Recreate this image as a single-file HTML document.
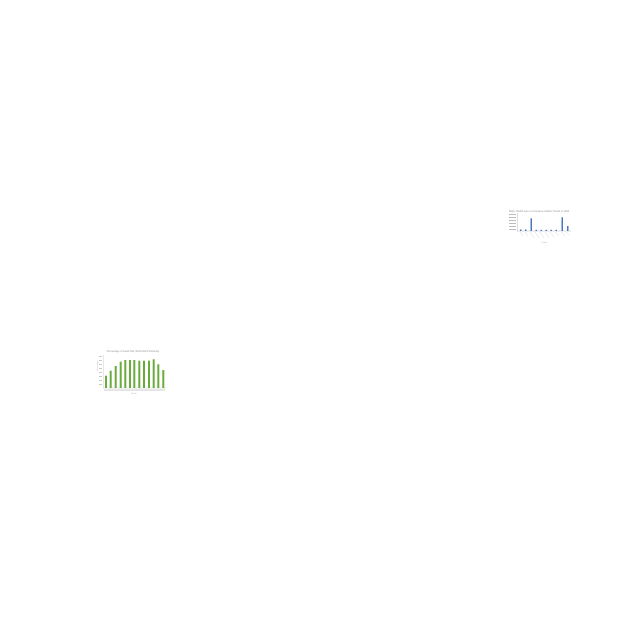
<!DOCTYPE html>
<html><head><style>html,body{margin:0;padding:0;background:#fff;width:640px;height:640px;overflow:hidden}</style></head>
<body>
<svg width="640" height="640" xmlns="http://www.w3.org/2000/svg" font-family="Liberation Sans, sans-serif">
<!-- blue chart -->
<text x="539" y="212" font-size="2.5" fill="#999" text-anchor="middle">Major Health-care or Insurance-related Trends in 2018</text>
<g fill="#bbb"><rect x="509" y="214" width="7" height="1"/><rect x="509" y="217" width="7" height="1"/><rect x="509" y="220" width="7" height="1"/><rect x="509" y="223" width="7" height="1"/><rect x="509" y="226" width="7" height="1"/><rect x="509" y="229" width="7" height="1"/></g>
<line x1="517.5" y1="213" x2="517.5" y2="231" stroke="#bbb" stroke-width="0.5"/>
<line x1="517" y1="231" x2="571" y2="231" stroke="#bbb" stroke-width="0.5"/>
<g fill="#4a78c0">
<rect x="520" y="229.5" width="1.5" height="1.5"/><rect x="525" y="229.5" width="1.5" height="1.5"/>
<rect x="530.5" y="218.3" width="1.5" height="12.7"/>
<rect x="535.5" y="229.8" width="1.5" height="1.2"/><rect x="540.5" y="229.8" width="1.5" height="1.2"/><rect x="545.5" y="229.8" width="1.5" height="1.2"/><rect x="550.5" y="229.8" width="1.5" height="1.2"/><rect x="555.5" y="229.8" width="1.5" height="1.2"/>
<rect x="561.5" y="217.3" width="1.5" height="13.7"/>
<rect x="567" y="226" width="1.5" height="5"/>
</g>
<g stroke="#ccc" stroke-width="0.4"><line x1="520" y1="232" x2="523" y2="236"/><line x1="525" y1="232" x2="528" y2="236"/><line x1="530" y1="232" x2="534" y2="238"/><line x1="535" y1="232" x2="539" y2="238"/><line x1="540" y1="232" x2="544" y2="238"/><line x1="545" y1="232" x2="549" y2="237"/><line x1="550" y1="232" x2="554" y2="237"/><line x1="555" y1="232" x2="559" y2="236"/><line x1="561" y1="232" x2="565" y2="236"/><line x1="566" y1="232" x2="569" y2="235"/></g>
<text x="544" y="243" font-size="2" fill="#bbb" text-anchor="middle">Trends</text>
<!-- green chart -->
<text x="133" y="352" font-size="2.5" fill="#999" text-anchor="middle">Percentage of Goals Met (2015-2016 Students)</text>
<text x="98" y="371" font-size="2" fill="#bbb" transform="rotate(-90 98 371)">Percentage</text>
<g fill="#bbb"><rect x="99" y="356" width="3" height="0.8"/><rect x="99" y="360" width="3" height="0.8"/><rect x="99" y="364" width="3" height="0.8"/><rect x="99" y="368" width="3" height="0.8"/><rect x="99" y="372" width="3" height="0.8"/><rect x="99" y="376" width="3" height="0.8"/><rect x="99" y="380" width="3" height="0.8"/><rect x="99" y="384" width="3" height="0.8"/></g>
<line x1="103.5" y1="355" x2="103.5" y2="388" stroke="#ccc" stroke-width="0.5"/>
<line x1="103" y1="388" x2="166" y2="388" stroke="#ccc" stroke-width="0.5"/>
<g fill="#6aab3e">
<rect x="105" y="375.7" width="2" height="12.3"/>
<rect x="109.7" y="370.7" width="2" height="17.3"/>
<rect x="114.7" y="366" width="2" height="22"/>
<rect x="119.7" y="361.7" width="2" height="26.3"/>
<rect x="124.3" y="360" width="2" height="28"/>
<rect x="129" y="360" width="2" height="28"/>
<rect x="133.3" y="360" width="2" height="28"/>
<rect x="138.3" y="360.7" width="2" height="27.3"/>
<rect x="143" y="360.7" width="2" height="27.3"/>
<rect x="148" y="360.7" width="2" height="27.3"/>
<rect x="152.7" y="359.3" width="2" height="28.7"/>
<rect x="157.3" y="364.3" width="2" height="23.7"/>
<rect x="162.3" y="370" width="2" height="18"/>
</g>
<g fill="#ccc"><rect x="104" y="389.5" width="61" height="1"/></g>
<text x="134" y="394" font-size="2" fill="#bbb" text-anchor="middle">Month</text>
</svg>
</body></html>
